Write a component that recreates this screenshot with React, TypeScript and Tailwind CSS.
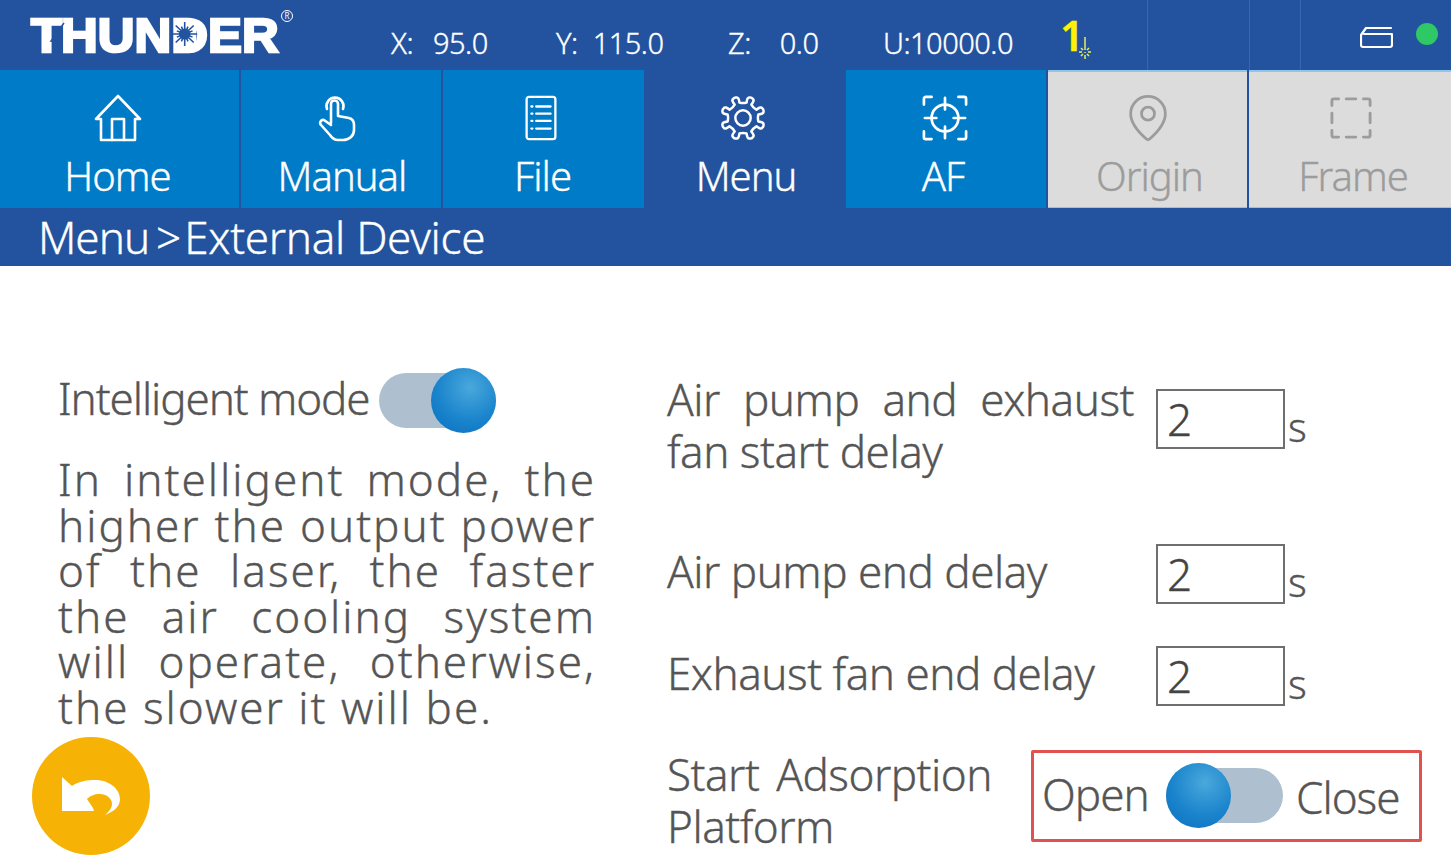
import React from 'react';
import { MapPin } from 'lucide-react';

const font = "font-['Noto_Sans',sans-serif]";

function HomeIcon() {
  return (
    <svg width="48" height="48" viewBox="0 0 48 48" fill="none" stroke="currentColor" strokeWidth="2.6" strokeLinejoin="round" strokeLinecap="round">
      <path d="M2 25 L24 2 L46 25 L41 25 L41 46 L7 46 L7 25 Z" />
      <path d="M18 46 V25 H30 V46" />
    </svg>
  );
}

function HandIcon() {
  return (
    <svg width="40" height="48" viewBox="0 0 40 48" fill="none" stroke="currentColor" strokeWidth="2.6" strokeLinejoin="round" strokeLinecap="round">
      <path d="M9 15 A8.500 8.500 0 1 1 25 15" />
      <path d="M13 29 V10 A3.5 3.5 0 0 1 20 10 V22 L31 24 C35 25 36 28 36 31 V36 C36 42 31 46 25 46 H20 C16 46 14 44 12 41 L3 31 C1 29 3 25 6 26 L13 31" />
    </svg>
  );
}

function FileIcon() {
  return (
    <svg width="34" height="46" viewBox="0 0 34 48" fill="none" stroke="currentColor" strokeWidth="2.4" strokeLinejoin="round" strokeLinecap="round">
      <rect x="2" y="2" width="30" height="44" rx="2.5" />
      <path d="M7 12 H8 M12 12 H27 M7 19.500 H8 M12 19.500 H27 M7 27 H8 M12 27 H27 M7 35 H8 M12 35 H27" />
    </svg>
  );
}

// gear with eight rounded teeth
function GearIcon() {
  const pts: string[] = [];
  for (let i = 0; i < 8; i++) {
    const a = (i * Math.PI) / 4 - Math.PI / 8;
    const step = Math.PI / 8;
    const p = (ang: number, r: number) => `${(24 + Math.cos(ang) * r).toFixed(1)} ${(24 + Math.sin(ang) * r).toFixed(1)}`;
    pts.push(`${i === 0 ? 'M' : 'L'}${p(a - step * 0.42, 16.5)}`);
    pts.push(`Q${p(a - step * 0.5, 22.5)} ${p(a - step * 0.2, 22.5)}`);
    pts.push(`Q${p(a, 23.5)} ${p(a + step * 0.2, 22.5)}`);
    pts.push(`Q${p(a + step * 0.5, 22.5)} ${p(a + step * 0.42, 16.5)}`);
    pts.push(`Q${p(a + step, 15)} ${p(a + step * 1.58, 16.5)}`);
  }
  return (
    <svg width="46" height="46" viewBox="0 0 48 48" fill="none" stroke="currentColor" strokeWidth="2.6" strokeLinejoin="round">
      <path d={`${pts.join(' ')} Z`} />
      <circle cx="24" cy="24" r="8" />
    </svg>
  );
}

function FocusIcon() {
  return (
    <svg width="46" height="46" viewBox="0 0 48 48" fill="none" stroke="currentColor" strokeWidth="2.8" strokeLinejoin="round" strokeLinecap="round">
      <path d="M10 2 H4 A2 2 0 0 0 2 4 V10 M38 2 H44 A2 2 0 0 1 46 4 V10 M10 46 H4 A2 2 0 0 1 2 44 V38 M38 46 H44 A2 2 0 0 0 46 44 V38" />
      <circle cx="24" cy="24" r="14" />
      <path d="M24 3 V15 M24 33 V45 M3 24 H15 M33 24 H45" />
    </svg>
  );
}

function FrameIcon() {
  return (
    <svg width="42" height="42" viewBox="0 0 44 44" fill="none" stroke="currentColor" strokeWidth="3" strokeLinecap="round" strokeLinejoin="round">
      <path d="M2 9 V4 A2 2 0 0 1 4 2 H9 M17 2 H27 M35 2 H40 A2 2 0 0 1 42 4 V9 M42 17 V27 M42 35 V40 A2 2 0 0 1 40 42 H35 M27 42 H17 M9 42 H4 A2 2 0 0 1 2 40 V35 M2 27 V17" />
    </svg>
  );
}

function Burst() {
  const rays = Array.from({ length: 16 }, (_, i) => {
    const a = (i * Math.PI) / 8;
    const r = i % 2 === 0 ? 12 : 8;
    return `M12 12 L${(12 + Math.cos(a) * r).toFixed(1)} ${(12 + Math.sin(a) * r).toFixed(1)}`;
  });
  return (
    <>
      <span className="absolute left-[5px] top-[17px] h-[26px] w-[19px] bg-white" />
      <svg width="24" height="24" viewBox="0 0 24 24" className="absolute left-[1px] top-[18px]">
        <path d={rays.join(' ')} stroke="#23539f" strokeWidth="1.500" />
        <circle cx="12" cy="12" r="5.500" fill="#23539f" />
      </svg>
    </>
  );
}

function Logo() {
  return (
    <div className="relative h-[70px] w-[391px] shrink-0 overflow-hidden">
      <div className="absolute left-[31px] top-[4px] flex origin-left scale-x-[1.06] font-['Liberation_Sans',sans-serif] text-[48px] leading-[64px] font-bold text-white [-webkit-text-stroke:2.500px_white]">
        <span>T</span>
        <span className="-ml-[1px]">HUN</span>
        <span className="relative">D<Burst /></span>
        <span>ER</span>
      </div>
      {/* lightning cut through the T */}
      <svg width="30" height="40" viewBox="0 0 30 40" fill="none" stroke="#23539f" strokeWidth="1.500" className="absolute left-[44px] top-[16px]">
        <path d="M20 7 L7 25 H14 V38" />
      </svg>
      <span className="absolute left-[281px] top-[10px] flex h-[12px] w-[12px] items-center justify-center rounded-full border border-white text-[8px] leading-none font-normal text-white [-webkit-text-stroke:0px]">R</span>
    </div>
  );
}

function Coord({ label, value, width, gap }: { label: string; value: string; width: string; gap: string }) {
  return (
    <div className={`flex ${width} ${gap} shrink-0 pt-[24px] text-[29px] leading-[38px] font-light tracking-[-0.5px] text-white`}>
      <span>{label}</span>
      <span>{value}</span>
    </div>
  );
}

function Header() {
  return (
    <header className="flex h-[70px] shrink-0 bg-[#23539f]">
      <Logo />
      <Coord label="X:" value="95.0" width="w-[165px]" gap="gap-[20px]" />
      <Coord label="Y:" value="115.0" width="w-[172px]" gap="gap-[15px]" />
      <Coord label="Z:" value="0.0" width="w-[155px]" gap="gap-[29px]" />
      <Coord label="U:10000.0" value="" width="w-[179px]" gap="gap-0" />
      <div className="flex w-[85px] shrink-0 items-start pt-[12px]">
        <span className="-ml-[2px] text-[42px] leading-[46px] font-semibold text-[#fff200]">1</span>
        <svg width="16" height="24" viewBox="0 0 16 24" className="-ml-[7px] mt-[25px]" stroke="#e6ee60" strokeWidth="1.500" fill="none">
          <path d="M8 0 V13 M8 15 V16 M2 15 H5 M11 15 H14 M4 11 L6 13 M12 11 L10 13 M4 19 L6 17 M12 19 L10 17 M8 18 V22" />
        </svg>
      </div>
      <div className="w-[102px] shrink-0 border-l border-[#3a66ad]" />
      <div className="w-[51px] shrink-0 border-l border-[#3a66ad]" />
      <div className="flex w-[101px] shrink-0 border-l border-[#3a66ad] pt-[26px] pl-[59px]">
        <svg width="33" height="24" viewBox="0 0 33 24" fill="none" stroke="white" strokeWidth="2.200" strokeLinejoin="round" strokeLinecap="round" className="shrink-0">
          <path d="M6 2 H31 M6 2 L1 9 V19 A2 2 0 0 0 3 21 H30 A2 2 0 0 0 32 19 V8 H4" />
        </svg>
      </div>
      <div className="relative flex-1">
        <span className="absolute left-[15px] top-[23px] h-[22px] w-[22px] rounded-full bg-[#2ec866]" />
      </div>
    </header>
  );
}

function Tab({ label, icon, width, shift, labelShift, active, disabled }: { label: string; icon: React.ReactNode; width: string; shift: string; labelShift: string; active?: boolean; disabled?: boolean }) {
  return (
    <div
      className={`flex ${width} flex-col items-center ${
        disabled
          ? 'border-t-2 border-b border-[#8fc4ec] bg-[#dcdcdc] pt-[22px] text-[#9c9c9c]'
          : active
            ? 'bg-[#23539f] pt-[24px] text-white'
            : 'bg-[#007bc7] pt-[24px] text-white'
      }`}
    >
      <div className={`flex h-[48px] items-center ${shift}`}>{icon}</div>
      <span className={`mt-[10px] text-[40px] leading-[48px] font-light tracking-[-1px] ${labelShift}`}>{label}</span>
    </div>
  );
}

function Tabs() {
  return (
    <nav className="flex h-[138px] shrink-0 gap-[2px] bg-[#23539f]">
      <Tab label="Home" width="w-[239px]" shift="-translate-x-[2px]" labelShift="-translate-x-[2px]" icon={<HomeIcon />} />
      <Tab label="Manual" width="w-[200px]" shift="-translate-x-[3px]" labelShift="translate-x-[1px]" icon={<HandIcon />} />
      <Tab label="File" width="w-[201px]" shift="-translate-x-[3px]" labelShift="-translate-x-[1px]" icon={<FileIcon />} />
      <Tab label="Menu" width="w-[198px]" shift="-translate-x-[2px]" labelShift="translate-x-[1px]" active icon={<GearIcon />} />
      <Tab label="AF" width="w-[200px]" shift="-translate-x-[1px]" labelShift="-translate-x-[3px]" icon={<FocusIcon />} />
      <Tab label="Origin" width="w-[199px]" shift="translate-x-[0px]" labelShift="translate-x-[2px]" disabled icon={<MapPin size={52} strokeWidth={1.3} />} />
      <Tab label="Frame" width="flex-1" shift="translate-x-[1px]" labelShift="translate-x-[3px]" disabled icon={<FrameIcon />} />
    </nav>
  );
}

function Toggle({ on }: { on: boolean }) {
  return (
    <div className="relative flex h-[65px] w-[117px] shrink-0 items-center">
      <div className="h-[55px] w-full rounded-full bg-[#aebfcf]" />
      <div
        className={`absolute top-0 h-[65px] w-[65px] rounded-full bg-[radial-gradient(circle_at_60%_30%,#4aa8dc_0%,#1a84cc_55%,#0b6fc0_100%)] ${
          on ? 'right-0' : 'left-0'
        }`}
      />
    </div>
  );
}

function NumberBox() {
  return (
    <div className="flex shrink-0 items-start">
      <div className="flex h-[60px] w-[129px] items-center border-2 border-[#6f6f6f] pl-[9px] text-[44px] leading-none font-light text-[#444]">2</div>
      <span className="ml-[3px] mt-[14px] text-[40px] leading-[48px] font-light">s</span>
    </div>
  );
}

export default function App() {
  return (
    <div className={`flex h-[858px] w-[1451px] flex-col overflow-hidden bg-white [-webkit-text-stroke:0.35px] ${font}`}>
      <Header />
      <Tabs />
      <div className="flex h-[58px] shrink-0 items-center bg-[#23539f] pl-[38px] text-[44px] leading-none font-light tracking-[-1px] text-white">
        <span>Menu</span>
        <span className="ml-[7px] mr-[4px]">&gt;</span>
        <span className="tracking-[-0.3px]">External Device</span>
      </div>
      <main className="flex flex-1 font-light text-[#555]">
        <section className="w-[667px] shrink-0 pl-[32px]">
          <div className="ml-[26px] w-[538px]">
            <div className="mt-[102px] flex items-center gap-[9px] text-[44px] leading-[60px] tracking-[-1.1px]">
              <span className="-translate-y-[3px]">Intelligent mode</span>
              <Toggle on />
            </div>
            <p className="mt-[24px] text-justify text-[44px] leading-[45.500px] tracking-[2px]">
              In intelligent mode, the higher the output power of the laser, the faster the air cooling system will operate, otherwise, the slower it will be.
            </p>
          </div>
          <button className="mt-[7px] flex h-[118px] w-[118px] items-center justify-center rounded-full bg-[#f7b305] text-white">
            <svg width="60" height="38" viewBox="0 0 60 38" fill="white">
              <path d="M1 0 L11 9 C18 4 26 3 35 3 C48 3 59 12 59 22 C59 30 52 35 44 38 C49 34 51 30 51 27 C51 21 45 17 39 17 C33 17 29 19 26 22 L32 31 L33 34 H1 Z" />
            </svg>
          </button>
        </section>
        <section className="flex flex-1 flex-col text-[44px] leading-[52px] tracking-[-0.5px]">
          <div className="mt-[103px] flex items-start">
            <p className="mt-[4px] w-[467px] text-justify">Air pump and exhaust fan start delay</p>
            <div className="ml-[22px] mt-[20px]"><NumberBox /></div>
          </div>
          <div className="mt-[67px] flex items-start">
            <p className="mt-[1px] w-[489px]">Air pump end delay</p>
            <NumberBox />
          </div>
          <div className="mt-[40px] flex items-start">
            <p className="mt-[1px] w-[489px]">Exhaust fan end delay</p>
            <NumberBox />
          </div>
          <div className="mt-[27px] flex items-start">
            <p className="w-[325px] pt-[13px] text-justify">Start Adsorption Platform</p>
            <div className="ml-[39px] mt-[15px] flex h-[92px] w-[391px] items-center rounded-[2px] border-[3px] border-[#e0524d] pl-[8px] tracking-[-1px]">
              <span className="w-[124px] -translate-y-[2px]">Open</span>
              <div className="-translate-y-[1px]"><Toggle on={false} /></div>
              <span className="ml-[13px] translate-y-[1px]">Close</span>
            </div>
          </div>
        </section>
      </main>
    </div>
  );
}
